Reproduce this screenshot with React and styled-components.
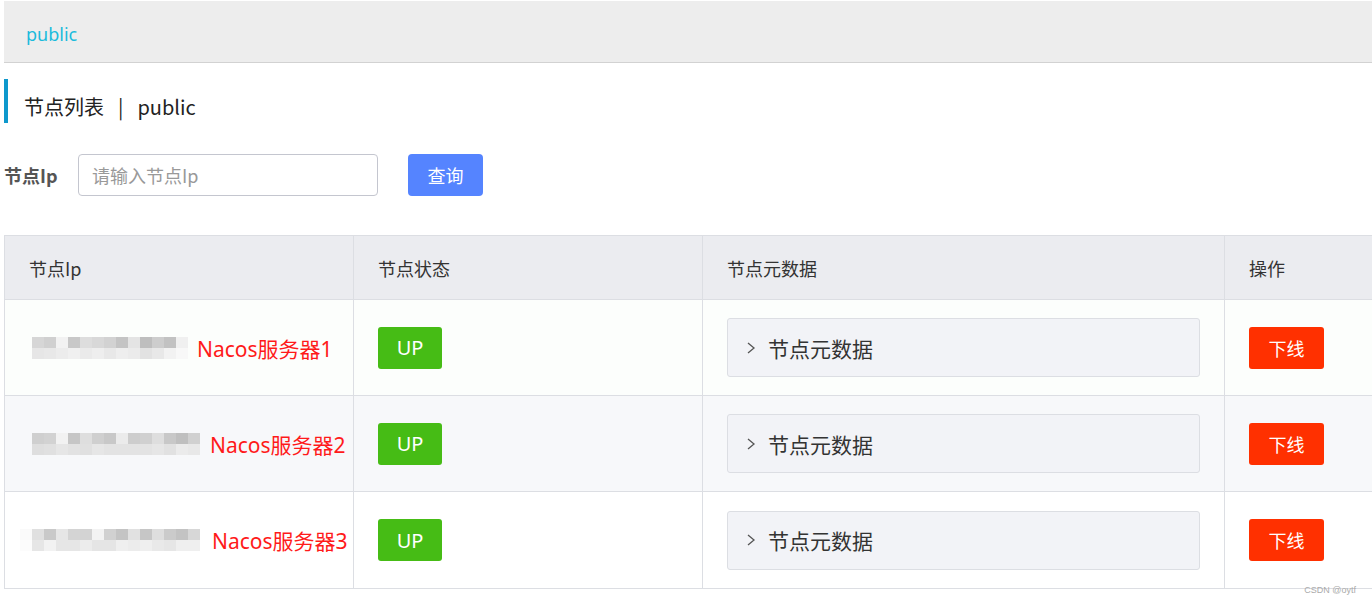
import React from "react";
import styled, { createGlobalStyle } from "styled-components";

const Global = createGlobalStyle`
  html, body { margin: 0; padding: 0; background: #fff; overflow: hidden; }
  body { font-family: "Noto Sans", "Noto Sans CJK SC", sans-serif; color: #333; }
  * { box-sizing: border-box; }
`;

const Page = styled.div`
  width: 1372px;
  height: 604px;
  padding: 1px 0 0 4px;
  position: relative;
  overflow: hidden;
`;

const TopBar = styled.div`
  height: 62px;
  background: #ededed;
  border-bottom: 1px solid #d2d2d2;
  display: flex;
  align-items: center;
  padding: 4px 0 0 22px;
  font-size: 18px;
  color: #1bbbdc;
`;

const Title = styled.div`
  margin-top: 16px;
  height: 44px;
  border-left: 4px solid #0e98cc;
  padding: 10px 0 0 16px;
  display: flex;
  align-items: center;
  font-size: 20px;
  color: #222;
  font-family: "Noto Sans CJK SC", sans-serif;
`;

const Sep = styled.span`
  margin: 0 14px;
`;

const Form = styled.div`
  margin-top: 31px;
  display: flex;
  align-items: center;
  height: 42px;
`;

const Label = styled.span`
  font-size: 18px;
  font-weight: 700;
  color: #555;
  width: 74px;
  font-family: "Noto Sans CJK SC", sans-serif;
`;

const Input = styled.div`
  width: 300px;
  height: 42px;
  border: 1px solid #c4c6cf;
  border-radius: 4px;
  display: flex;
  align-items: center;
  padding-left: 13px;
  font-size: 18px;
  color: #999;
  font-family: "Noto Sans CJK SC", sans-serif;
`;

const SearchBtn = styled.div`
  margin-left: 30px;
  width: 75px;
  height: 42px;
  border-radius: 4px;
  background: #5584ff;
  color: #fff;
  font-size: 18px;
  display: flex;
  align-items: center;
  justify-content: center;
  font-family: "Noto Sans CJK SC", sans-serif;
`;

const Table = styled.div`
  margin-top: 39px;
  width: 1420px;
  border: 1px solid #dcdee3;
  display: grid;
  grid-template-columns: 349px 349px 522px 1fr;
`;

const Head = styled.div`
  height: 64px;
  background: #ebecf0;
  display: flex;
  align-items: center;
  padding-left: 24px;
  font-size: 18px;
  color: #333;
  border-bottom: 1px solid #dcdee3;
  border-right: ${p => (p.$last ? "none" : "1px solid #dcdee3")};
  font-family: "Noto Sans CJK SC", sans-serif;
`;

const Cell = styled.div`
  height: 96px;
  background: ${p => p.$bg};
  display: flex;
  align-items: center;
  padding-left: 24px;
  border-bottom: ${p => (p.$bottom ? "none" : "1px solid #dcdee3")};
  border-right: ${p => (p.$last ? "none" : "1px solid #dcdee3")};
`;

const Mosaic = styled.div`
  display: grid;
  grid-template-columns: repeat(${p => p.$cols}, 12px);
  grid-auto-rows: 11px;
  margin-left: ${p => p.$ml}px;
`;

const Px = styled.div`
  background: ${p => p.$c};
`;

const ServerName = styled.span`
  color: #ff1a1a;
  font-size: 21px;
  margin-left: ${p => p.$gap}px;
  font-family: "Noto Sans", "Noto Sans CJK SC", sans-serif;
`;

const Up = styled.div`
  width: 64px;
  height: 42px;
  border-radius: 3px;
  background: #46bc15;
  color: #fff;
  font-size: 20px;
  display: flex;
  align-items: center;
  justify-content: center;
`;

const Meta = styled.div`
  width: 473px;
  height: 59px;
  background: #f2f3f7;
  border: 1px solid #dcdee3;
  border-radius: 3px;
  display: flex;
  align-items: center;
  padding-left: 18px;
  font-size: 21px;
  color: #333;
  font-family: "Noto Sans CJK SC", sans-serif;
`;

const Arrow = styled.svg`
  width: 10px;
  height: 12px;
  margin-right: 12px;
`;

const Offline = styled.div`
  width: 75px;
  height: 42px;
  border-radius: 3px;
  background: #ff3000;
  color: #fff;
  font-size: 18px;
  display: flex;
  align-items: center;
  justify-content: center;
  font-family: "Noto Sans CJK SC", sans-serif;
`;

const Watermark = styled.div`
  position: absolute;
  right: 16px;
  bottom: 9px;
  font-size: 9px;
  color: #aaa;
  font-family: "Liberation Sans", sans-serif;
`;

const shades = [
  ["#d6d6d6","#d0d0d0","#f2f2f2","#c8c8c8","#dddddd","#d8d8d8","#d2d2d2","#c4c4c4","#e4e4e4","#bebebe","#cdcdcd","#c2c2c2","#f0f0f0"],
  ["#e6e6e6","#e8e8e8","#ececec","#f0f0f0","#eaeaea","#eeeeee","#e8e8e8","#eeeeee","#ebebeb","#e2e2e2","#e8e8e8","#f2f2f2","#f8f8f8"],
];
const shades2 = [
  ["#cfcfcf","#d2d2d2","#f2f2f2","#c6c6c6","#dedede","#cfcfcf","#c8c8c8","#ebebeb","#cdcdcd","#d0d0d0","#dedede","#c8c8c8","#bfbfbf","#d0d0d0"],
  ["#dedede","#e0e0e0","#e6e6e6","#e2e2e2","#e0e0e0","#e6e6e6","#e3e3e3","#e3e3e3","#e3e3e3","#e3e3e3","#e6e6e6","#e1e1e1","#ebebeb","#e8e8e8"],
];
const shades3 = [
  ["#fafafa","#e0e0e0","#c9c9c9","#e6e6e6","#d4d4d4","#d3d3d3","#f3f3f3","#d1d1d1","#c4c4c4","#e1e1e1","#c6c6c6","#dedede","#cbcbcb","#c3c3c3","#d7d7d7"],
  ["#fcfcfc","#e6e6e6","#f2f2f2","#e6e6e6","#e6e6e6","#ececec","#e5e5e5","#e5e5e5","#efefef","#ececec","#efefef","#e9e9e9","#e6e6e6","#efefef","#efefef"],
];

const rows = [
  { bg: "#fcfefc", mosaic: shades, ml: 3, gap: 9, name: "Nacos服务器1" },
  { bg: "#f7f8fa", mosaic: shades2, ml: 3, gap: 10, name: "Nacos服务器2" },
  { bg: "#ffffff", mosaic: shades3, ml: -9, gap: 12, name: "Nacos服务器3" },
];

export default function App() {
  return (
    <>
      <Global />
      <Page>
        <TopBar>public</TopBar>
        <Title>
          节点列表<Sep>|</Sep>public
        </Title>
        <Form>
          <Label>节点Ip</Label>
          <Input>请输入节点Ip</Input>
          <SearchBtn>查询</SearchBtn>
        </Form>
        <Table>
          <Head>节点Ip</Head>
          <Head>节点状态</Head>
          <Head>节点元数据</Head>
          <Head $last>操作</Head>
          {rows.map((r, i) => {
            const bottom = i === rows.length - 1;
            return (
              <React.Fragment key={i}>
                <Cell $bg={r.bg} $bottom={bottom}>
                  <Mosaic $cols={r.mosaic[0].length} $ml={r.ml}>
                    {r.mosaic.flat().map((c, j) => (
                      <Px key={j} $c={c} />
                    ))}
                  </Mosaic>
                  <ServerName $gap={r.gap}>{r.name}</ServerName>
                </Cell>
                <Cell $bg={r.bg} $bottom={bottom}>
                  <Up>UP</Up>
                </Cell>
                <Cell $bg={r.bg} $bottom={bottom}>
                  <Meta>
                    <Arrow viewBox="0 0 10 12">
                      <path d="M2 1 L8 6 L2 11" fill="none" stroke="#555" strokeWidth="1.3" />
                    </Arrow>
                    节点元数据
                  </Meta>
                </Cell>
                <Cell $bg={r.bg} $bottom={bottom} $last>
                  <Offline>下线</Offline>
                </Cell>
              </React.Fragment>
            );
          })}
        </Table>
        <Watermark>CSDN @oytf</Watermark>
      </Page>
    </>
  );
}
